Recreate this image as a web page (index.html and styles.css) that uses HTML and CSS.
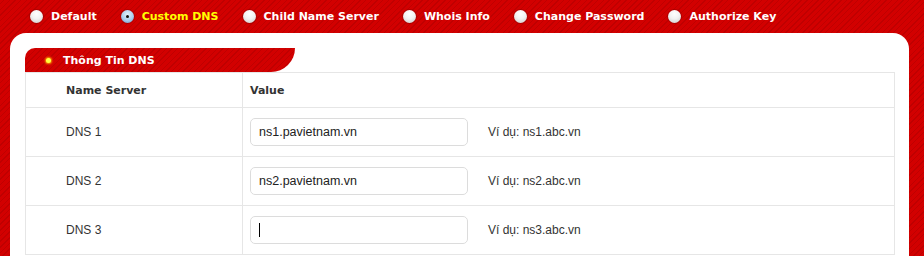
FILE: index.html
```html
<!DOCTYPE html>
<html lang="vi">
<head>
    <meta charset="UTF-8">
    <title>Custom DNS</title>
    <link rel="stylesheet" href="styles.css">
</head>
<body>
    <div class="tabs">
        <label class="tab"><span class="radio"></span>Default</label>
        <label class="tab active"><span class="radio"></span>Custom DNS</label>
        <label class="tab"><span class="radio"></span>Child Name Server</label>
        <label class="tab"><span class="radio"></span>Whois Info</label>
        <label class="tab"><span class="radio"></span>Change Password</label>
        <label class="tab"><span class="radio"></span>Authorize Key</label>
    </div>

    <div class="panel">
        <div class="panel-title"><span class="dot"></span>Thông Tin DNS</div>

        <table class="dns-table">
            <thead>
                <tr>
                    <th class="col-name">Name Server</th>
                    <th>Value</th>
                </tr>
            </thead>
            <tbody>
                <tr>
                    <td class="col-name">DNS 1</td>
                    <td>
                        <div class="field">
                            <span class="input-wrap"><input type="text" value="ns1.pavietnam.vn"></span>
                            <span class="hint">Ví dụ: ns1.abc.vn</span>
                        </div>
                    </td>
                </tr>
                <tr>
                    <td class="col-name">DNS 2</td>
                    <td>
                        <div class="field">
                            <span class="input-wrap"><input type="text" value="ns2.pavietnam.vn"></span>
                            <span class="hint">Ví dụ: ns2.abc.vn</span>
                        </div>
                    </td>
                </tr>
                <tr>
                    <td class="col-name">DNS 3</td>
                    <td>
                        <div class="field">
                            <span class="input-wrap typing"><input type="text" value=""></span>
                            <span class="hint">Ví dụ: ns3.abc.vn</span>
                        </div>
                    </td>
                </tr>
            </tbody>
        </table>
    </div>
</body>
</html>
```

FILE: styles.css
```css
* {
    margin: 0;
    padding: 0;
    box-sizing: border-box;
}

body {
    font-family: "Liberation Sans", Arial, sans-serif;
    font-size: 12px;
    color: #333;
    background: repeating-linear-gradient(-45deg, #d20000 0 3px, #bf0000 3px 4px);
    height: 256px;
    overflow: hidden;
}

/* top radio tabs */
.tabs {
    display: flex;
    align-items: center;
    height: 33px;
    padding-left: 30px;
}

.tab {
    display: flex;
    align-items: center;
    margin-right: 24px;
    font-family: "DejaVu Sans", Verdana, sans-serif;
    font-weight: bold;
    font-size: 11px;
    color: #fff;
    cursor: pointer;
}

.tab.active {
    color: #ffff00;
}

.radio {
    width: 13px;
    height: 13px;
    border-radius: 50%;
    margin-right: 8px;
    background: radial-gradient(circle at 50% 30%, #ffffff 0%, #f2f2f2 45%, #c8c8c8 100%);
    box-shadow: 0 0 0 1px rgba(120, 0, 0, 0.35);
    position: relative;
}

.tab.active .radio {
    background: radial-gradient(circle at 50% 35%, #e4f1fc 0%, #a9cdee 55%, #5f92c8 100%);
}

.tab.active .radio::after {
    content: '';
    position: absolute;
    left: 5px;
    top: 5px;
    width: 3px;
    height: 3px;
    border-radius: 50%;
    background: #111;
}

/* white panel */
.panel {
    background: #fff;
    margin: 0 15px 0 10px;
    border-radius: 16px 16px 0 0;
    padding: 15px 14px 0 15px;
    height: 223px;
    overflow: hidden;
}

.panel-title {
    display: flex;
    align-items: center;
    width: 270px;
    height: 24px;
    padding-left: 21px;
    background: repeating-linear-gradient(-45deg, #d20000 0 3px, #bf0000 3px 4px);
    border-radius: 10px 0 24px 0;
    font-family: "DejaVu Sans", Verdana, sans-serif;
    font-weight: bold;
    font-size: 11px;
    color: #fff;
}

.dot {
    width: 5px;
    height: 5px;
    border-radius: 50%;
    margin-right: 12px;
    background: #ffff40;
    box-shadow: 0 0 2px 1px #ff9a00;
}

/* table */
.dns-table {
    width: 100%;
    border-collapse: collapse;
    border: 1px solid #e6e6e6;
    border-top: none;
}

.dns-table th,
.dns-table td {
    text-align: left;
    border: 1px solid #e6e6e6;
    padding: 0 0 0 7px;
    vertical-align: middle;
}

.dns-table th {
    height: 35px;
    font-family: "DejaVu Sans", Verdana, sans-serif;
    font-size: 11px;
    font-weight: bold;
    color: #333;
}

.dns-table td {
    height: 49px;
}

.dns-table .col-name {
    width: 217px;
    padding-left: 40px;
}

.field {
    display: flex;
    align-items: center;
    gap: 20px;
}

.input-wrap {
    position: relative;
    display: block;
}

.field input {
    display: block;
    width: 218px;
    height: 28px;
    border: 1px solid #dcdcdc;
    border-radius: 5px;
    padding: 0 8px;
    font-family: "Liberation Sans", Arial, sans-serif;
    font-size: 12.5px;
    color: #222;
}

.field input:focus {
    outline: none;
}

/* text cursor in the field being typed into */
.input-wrap.typing::after {
    content: '';
    position: absolute;
    left: 9px;
    top: 7px;
    width: 1px;
    height: 14px;
    background: #000;
}
```
